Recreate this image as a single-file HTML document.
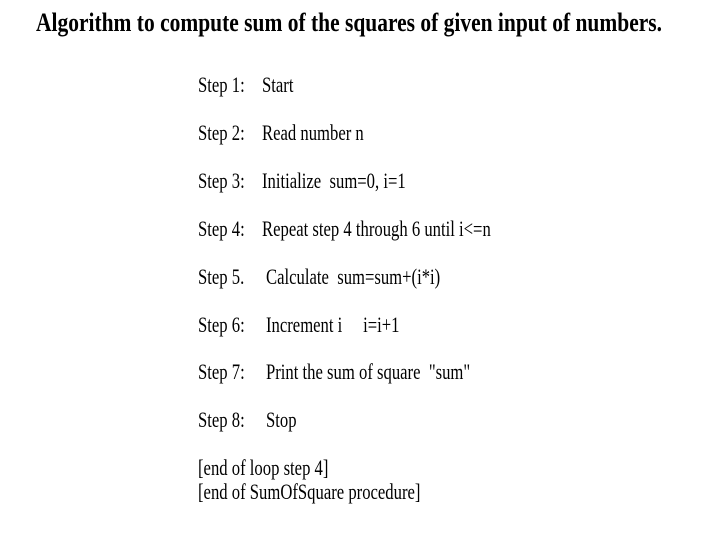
<!DOCTYPE html>
<html><head><style>
body{margin:0;width:725px;height:537px;background:#fff;position:relative;overflow:hidden;font-family:"Liberation Serif",serif;color:#000}
.t{position:absolute;white-space:pre;line-height:1;transform-origin:0 0;font-size:22px;transform:scaleX(0.757)}
.h{font-weight:bold;font-size:26px;transform:scaleX(0.826)}
</style></head><body>
<div class="t h" style="left:36px;top:10px">Algorithm to compute sum of the squares of given input of numbers.</div>
<div class="t" style="left:198px;top:74px">Step 1:</div><div class="t" style="left:262px;top:74px">Start</div>
<div class="t" style="left:198px;top:122px">Step 2:</div><div class="t" style="left:262px;top:122px">Read number n</div>
<div class="t" style="left:198px;top:170px">Step 3:</div><div class="t" style="left:262px;top:170px">Initialize  sum=0, i=1</div>
<div class="t" style="left:198px;top:218px">Step 4:</div><div class="t" style="left:262px;top:218px">Repeat step 4 through 6 until i&lt;=n</div>
<div class="t" style="left:198px;top:266px">Step 5.</div><div class="t" style="left:266px;top:266px">Calculate  sum=sum+(i*i)</div>
<div class="t" style="left:198px;top:314px">Step 6:</div><div class="t" style="left:266px;top:314px">Increment i     i=i+1</div>
<div class="t" style="left:198px;top:361px">Step 7:</div><div class="t" style="left:266px;top:361px">Print the sum of square  "sum"</div>
<div class="t" style="left:198px;top:409px">Step 8:</div><div class="t" style="left:266px;top:409px">Stop</div>
<div class="t" style="left:198px;top:457px">[end of loop step 4]</div>
<div class="t" style="left:198px;top:481px">[end of SumOfSquare procedure]</div>
</body></html>
